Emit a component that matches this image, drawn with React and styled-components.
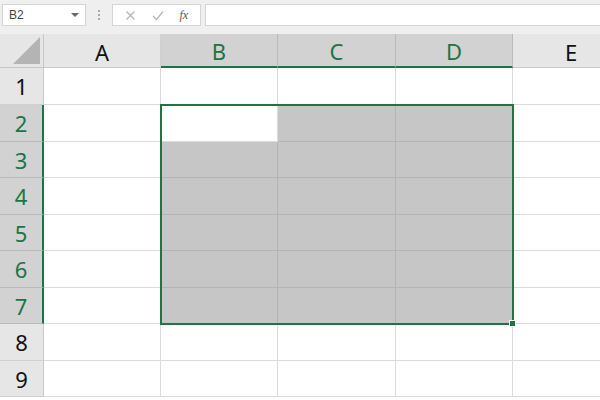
import React from 'react'
import styled, { createGlobalStyle } from 'styled-components'

const Global = createGlobalStyle`
  html, body { margin: 0; padding: 0; background: #fff; }
  body { width: 600px; height: 400px; overflow: hidden; font-family: "Noto Sans", "Liberation Sans", sans-serif; }
`

const Page = styled.div`
  width: 600px;
  height: 400px;
  overflow: hidden;
  background: #fff;
`

const Toolbar = styled.div`
  height: 34px;
  background: #efefef;
  display: flex;
  align-items: flex-start;
  padding-top: 4px;
  box-sizing: border-box;
`

const NameBox = styled.div`
  width: 84px;
  height: 22px;
  margin-left: 2px;
  box-sizing: border-box;
  background: #fff;
  border: 1px solid #d4d4d4;
  display: flex;
  align-items: center;
  justify-content: space-between;
  padding: 0 6px 0 6px;
  font-family: "Liberation Sans", Arial, sans-serif;
  font-size: 12px;
  color: #444;
`

const Caret = styled.span`
  width: 0;
  height: 0;
  border-left: 4px solid transparent;
  border-right: 4px solid transparent;
  border-top: 4px solid #666;
`

const Grip = styled.div`
  width: 26px;
  height: 22px;
  display: flex;
  flex-direction: column;
  align-items: center;
  justify-content: center;
  gap: 2px;
  span { width: 2px; height: 2px; background: #aaa; }
`

const FuncBox = styled.div`
  width: 89px;
  height: 22px;
  box-sizing: border-box;
  background: #fff;
  border: 1px solid #d4d4d4;
  display: flex;
  align-items: center;
  justify-content: space-around;
  padding: 0 4px;
  color: #b0b0b0;
`

const Fx = styled.span`
  font-family: "Liberation Serif", serif;
  font-style: italic;
  font-size: 12px;
  color: #555;
`

const FormulaInput = styled.div`
  flex: 1;
  height: 22px;
  margin-left: 4px;
  box-sizing: border-box;
  background: #fff;
  border: 1px solid #d4d4d4;
  border-right: none;
`

const Sheet = styled.div`
  position: relative;
  display: grid;
  grid-template-columns: 44px 117px 117px 118px 117px 117px;
  grid-template-rows: 34px 37px 37px 36px 37px 36px 37px 36px 37px 36px;
`

const Corner = styled.div`
  background: #e6e6e6;
  border-right: 1px solid #c8c8c8;
  border-bottom: 1px solid #c8c8c8;
  position: relative;
  box-sizing: border-box;
  &::after {
    content: '';
    position: absolute;
    right: 3px;
    bottom: 3px;
    width: 0;
    height: 0;
    border-left: 27px solid transparent;
    border-bottom: 27px solid #b4b4b4;
  }
`

const ColHead = styled.div`
  box-sizing: border-box;
  background: ${p => (p.$sel ? '#d2d2d2' : '#e6e6e6')};
  border-right: 1px solid ${p => (p.$sel ? '#bababa' : '#d0d0d0')};
  border-bottom: ${p => (p.$sel ? '2px solid #217346' : '1px solid #c8c8c8')};
  color: ${p => (p.$sel ? '#217346' : '#111')};
  font-size: 22px;
  display: flex;
  align-items: center;
  justify-content: center;
  padding-top: 2px;
`

const RowHead = styled.div`
  box-sizing: border-box;
  background: ${p => (p.$sel ? '#d2d2d2' : '#e6e6e6')};
  border-bottom: 1px solid ${p => (p.$sel ? '#bababa' : '#d0d0d0')};
  border-right: ${p => (p.$sel ? '2px solid #217346' : '1px solid #c8c8c8')};
  color: ${p => (p.$sel ? '#217346' : '#111')};
  font-size: 22px;
  display: flex;
  align-items: center;
  justify-content: center;
`

const Cell = styled.div`
  box-sizing: border-box;
  background: ${p => (p.$fill ? '#c6c6c6' : '#fff')};
  border-right: 1px solid ${p => (p.$fill ? '#b4b4b4' : '#dcdcdc')};
  border-bottom: 1px solid ${p => (p.$fill ? '#b4b4b4' : '#dcdcdc')};
`

const Selection = styled.div`
  position: absolute;
  left: 160px;
  top: 70px;
  width: 354px;
  height: 221px;
  box-sizing: border-box;
  border: 2px solid #217346;
  pointer-events: none;
`

const Handle = styled.div`
  position: absolute;
  right: -4px;
  bottom: -4px;
  width: 5px;
  height: 5px;
  background: #217346;
  border: 1px solid #fff;
`

const cols = ['A', 'B', 'C', 'D', 'E']
const rows = [1, 2, 3, 4, 5, 6, 7, 8, 9]
const selCols = ['B', 'C', 'D']
const isSelRow = r => r >= 2 && r <= 7

export default function App() {
  return (
    <Page>
      <Global />
      <Toolbar>
        <NameBox>
          B2
          <Caret />
        </NameBox>
        <Grip>
          <span />
          <span />
          <span />
        </Grip>
        <FuncBox>
          <svg width="11" height="11" viewBox="0 0 11 11">
            <path d="M1.5 1.5 L9.5 9.5 M9.5 1.5 L1.5 9.5" stroke="#b4b4b4" strokeWidth="1.2" fill="none" />
          </svg>
          <svg width="12" height="11" viewBox="0 0 12 11">
            <path d="M1 6 L4.5 9.5 L11 1.5" stroke="#b4b4b4" strokeWidth="1.2" fill="none" />
          </svg>
          <Fx>fx</Fx>
        </FuncBox>
        <FormulaInput />
      </Toolbar>
      <Sheet>
        <Corner />
        {cols.map(c => (
          <ColHead key={c} $sel={selCols.includes(c)}>
            {c}
          </ColHead>
        ))}
        {rows.map(r => (
          <React.Fragment key={r}>
            <RowHead $sel={isSelRow(r)}>{r}</RowHead>
            {cols.map(c => (
              <Cell
                key={c}
                $fill={isSelRow(r) && selCols.includes(c) && !(r === 2 && c === 'B')}
              />
            ))}
          </React.Fragment>
        ))}
        <Selection>
          <Handle />
        </Selection>
      </Sheet>
    </Page>
  )
}
